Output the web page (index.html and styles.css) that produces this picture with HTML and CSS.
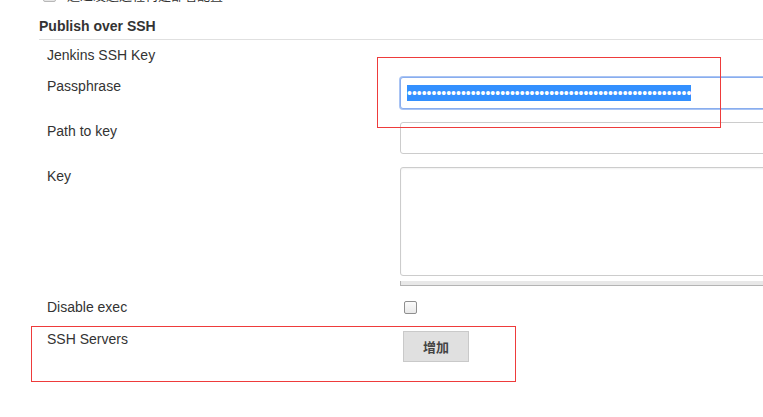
FILE: index.html
```html
<!DOCTYPE html>
<html lang="zh">
<head>
<meta charset="utf-8">
<title>Publish over SSH</title>
<link rel="stylesheet" href="styles.css">
</head>
<body>
<div class="page">
  <div class="top-row">
    <span class="top-check"></span>
    <span class="top-text">通过发送远程构建部署配置</span>
  </div>
  <div class="section-title">Publish over SSH</div>

  <div class="row row-first">
    <div class="label">Jenkins SSH Key</div>
    <div class="field"></div>
  </div>

  <div class="row">
    <div class="label">Passphrase</div>
    <div class="field">
      <div class="input input-focus"><span class="selected">••••••••••••••••••••••••••••••••••••••••••••••••••••••••••</span></div>
    </div>
  </div>

  <div class="row">
    <div class="label">Path to key</div>
    <div class="field">
      <div class="input"></div>
    </div>
  </div>

  <div class="row row-key">
    <div class="label">Key</div>
    <div class="field">
      <div class="textarea"></div>
      <div class="grip"></div>
    </div>
  </div>

  <div class="row row-check">
    <div class="label">Disable exec</div>
    <div class="field">
      <span class="checkbox"></span>
    </div>
  </div>

  <div class="row">
    <div class="label">SSH Servers</div>
    <div class="field">
      <button class="btn" type="button">增加</button>
    </div>
  </div>
</div>

<div class="mark mark-pass"></div>
<div class="mark mark-servers"></div>
</body>
</html>
```

FILE: styles.css
```css
html, body {
  margin: 0;
  padding: 0;
  background: #ffffff;
  overflow: hidden;
}

body {
  font-family: "Liberation Sans", Arial, "Noto Sans CJK SC", sans-serif;
  font-size: 14px;
  line-height: 16px;
  color: #333333;
  width: 763px;
  height: 417px;
  position: relative;
}

.page {
  padding-left: 39px;
  width: 1000px;
}

.top-row {
  height: 16px;
  margin-top: -13px;
  display: flex;
  align-items: center;
}

.top-check {
  display: block;
  width: 11px;
  height: 11px;
  margin-left: 4px;
  border: 1px solid #b8b8b8;
  background: #e6e6e6;
  border-radius: 2px;
}

.top-text {
  margin-left: 11px;
  font-size: 13px;
  color: #333333;
  font-family: "Noto Sans CJK SC", sans-serif;
}

.section-title {
  margin-top: 15px;
  font-weight: bold;
  padding-bottom: 5px;
  border-bottom: 1px solid #e0e0e0;
}

.row {
  display: grid;
  grid-template-columns: 361px 600px;
  margin-bottom: 13px;
}

.row-first {
  margin-top: 6px;
  min-height: 18px;
}

.row-key {
  margin-bottom: 12px;
}

.label {
  padding-left: 8px;
  padding-top: 1px;
}

.input {
  box-sizing: border-box;
  height: 32px;
  border: 1px solid #cccccc;
  border-radius: 3px;
  background: #ffffff;
  padding: 7px 6px;
}

.input-focus {
  border-color: #89adee;
  box-shadow: 0 0 0 1px #a9c4f4;
}

.selected {
  display: inline-block;
  background: #3390ff;
  color: #ffffff;
  font-size: 14px;
  line-height: 16px;
  letter-spacing: 0;
  white-space: nowrap;
}

.textarea {
  box-sizing: border-box;
  height: 109px;
  border: 1px solid #cccccc;
  border-radius: 3px;
  box-shadow: inset 0 1px 2px rgba(0, 0, 0, 0.06);
}

.grip {
  margin-top: 5px;
  height: 4px;
  background: #e8e8e8;
  border-bottom: 1px solid #b3b3b3;
  border-left: 1px solid #b3b3b3;
}

.checkbox {
  display: block;
  box-sizing: border-box;
  width: 13px;
  height: 13px;
  margin: 3px 3px 3px 4px;
  border: 1px solid #8f8f8f;
  border-radius: 2px;
  background: linear-gradient(#fbfbfb, #e9e9e9);
}

.btn {
  box-sizing: border-box;
  width: 66px;
  height: 31px;
  margin: 1px 0 0 3px;
  padding: 0;
  border: 1px solid #c9c9c9;
  background: #e0e0e0;
  color: #444444;
  font-family: "Noto Sans CJK SC", sans-serif;
  font-size: 13px;
  font-weight: bold;
}

.mark {
  position: absolute;
  border: 1px solid #ee3b3b;
  box-sizing: border-box;
  pointer-events: none;
}

.mark-pass {
  left: 377px;
  top: 57px;
  width: 344px;
  height: 71px;
}

.mark-servers {
  left: 31px;
  top: 326px;
  width: 485px;
  height: 56px;
}
```
